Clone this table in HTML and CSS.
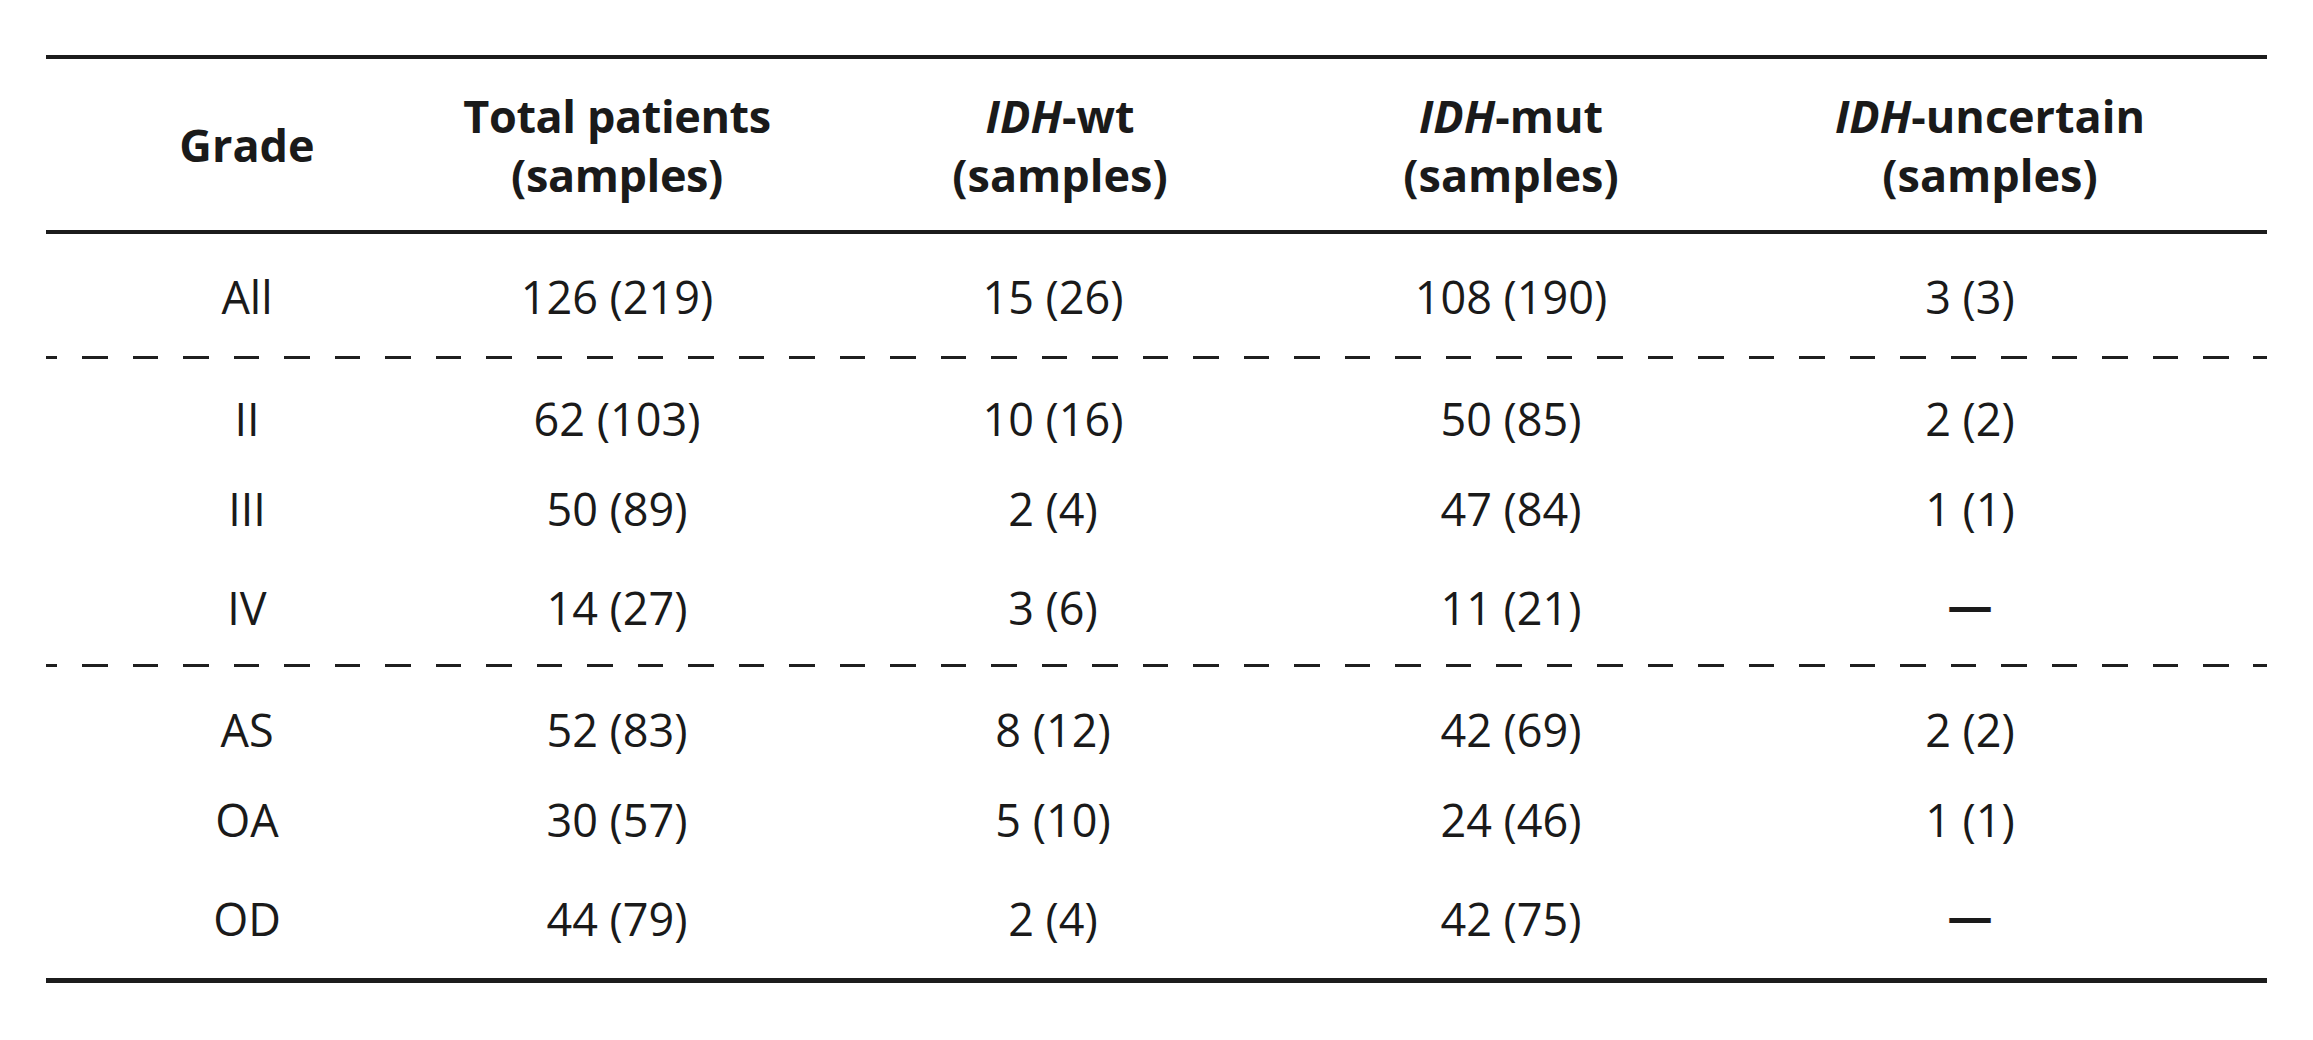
FILE: index.html
```html
<!DOCTYPE html>
<html lang="en">
<head>
<meta charset="utf-8">
<title>IDH status by grade</title>
<link rel="stylesheet" href="styles.css">
</head>
<body>
<div class="tbl">
  <div class="rule"></div>
  <div class="row head">
    <div class="cell">Grade</div>
    <div class="cell tight">Total patients<br>(samples)</div>
    <div class="cell c3"><i>IDH</i>-wt<br>(samples)</div>
    <div class="cell"><i>IDH</i>-mut<br>(samples)</div>
    <div class="cell c5"><i>IDH</i>-uncertain<br>(samples)</div>
  </div>
  <div class="rule"></div>

  <div class="group g1">
    <div class="row">
      <div class="cell">All</div>
      <div class="cell">126 (219)</div>
      <div class="cell">15 (26)</div>
      <div class="cell">108 (190)</div>
      <div class="cell c5">3 (3)</div>
    </div>
  </div>
  <div class="dash"></div>

  <div class="group g2">
    <div class="row">
      <div class="cell">II</div>
      <div class="cell">62 (103)</div>
      <div class="cell">10 (16)</div>
      <div class="cell">50 (85)</div>
      <div class="cell c5">2 (2)</div>
    </div>
    <div class="row">
      <div class="cell">III</div>
      <div class="cell">50 (89)</div>
      <div class="cell">2 (4)</div>
      <div class="cell">47 (84)</div>
      <div class="cell c5">1 (1)</div>
    </div>
    <div class="row last">
      <div class="cell">IV</div>
      <div class="cell">14 (27)</div>
      <div class="cell">3 (6)</div>
      <div class="cell">11 (21)</div>
      <div class="cell c5"><span class="nil">—</span></div>
    </div>
  </div>
  <div class="dash"></div>

  <div class="group g3">
    <div class="row">
      <div class="cell">AS</div>
      <div class="cell">52 (83)</div>
      <div class="cell">8 (12)</div>
      <div class="cell">42 (69)</div>
      <div class="cell c5">2 (2)</div>
    </div>
    <div class="row">
      <div class="cell">OA</div>
      <div class="cell">30 (57)</div>
      <div class="cell">5 (10)</div>
      <div class="cell">24 (46)</div>
      <div class="cell c5">1 (1)</div>
    </div>
    <div class="row last">
      <div class="cell">OD</div>
      <div class="cell">44 (79)</div>
      <div class="cell">2 (4)</div>
      <div class="cell">42 (75)</div>
      <div class="cell c5"><span class="nil">—</span></div>
    </div>
  </div>
  <div class="rule bottom"></div>
</div>
</body>
</html>
```

FILE: styles.css
```css
html, body {
  margin: 0;
  padding: 0;
  background: #ffffff;
}

body {
  font-family: "Open Sans", "Noto Sans", "Liberation Sans", sans-serif;
  color: #1a1a1a;
}

.tbl {
  width: 2221px;
  margin: 55px 0 0 46px;
  display: flex;
  flex-direction: column;
}

.rule {
  height: 4px;
  background: #1c1c1c;
}

.rule.bottom {
  height: 5px;
}

.dash {
  height: 3px;
  background-image: repeating-linear-gradient(to right, #1f1f1f 0, #1f1f1f 25.25px, transparent 25.25px, transparent 50.5px);
  background-position: -14px 0;
}

.row {
  display: grid;
  grid-template-columns: 402px 338px 534px 382px 565px;
  align-items: center;
  font-size: 45px;
  line-height: 60px;
  height: 60px;
}

.row.head {
  height: 171px;
  line-height: 59px;
  font-weight: 700;
}

.cell {
  text-align: center;
  white-space: nowrap;
}

.cell.c5 {
  padding-right: 29px;
}

.head .cell.c3 {
  padding-left: 14px;
}

.head .cell.c5 {
  padding-right: 0;
  padding-left: 11px;
}

.head .cell.tight {
  letter-spacing: -0.4px;
}

.head i {
  font-style: italic;
}

.group {
  display: flex;
  flex-direction: column;
  gap: 30px;
}

.row.last {
  margin-top: 6px;
}

.g1 { padding: 33px 0 29px; }
.g2 { padding: 30px 0 29px; }
.g3 { padding: 33px 0 32px; }

.nil {
  font-weight: 700;
  vertical-align: 5px;
}
```
